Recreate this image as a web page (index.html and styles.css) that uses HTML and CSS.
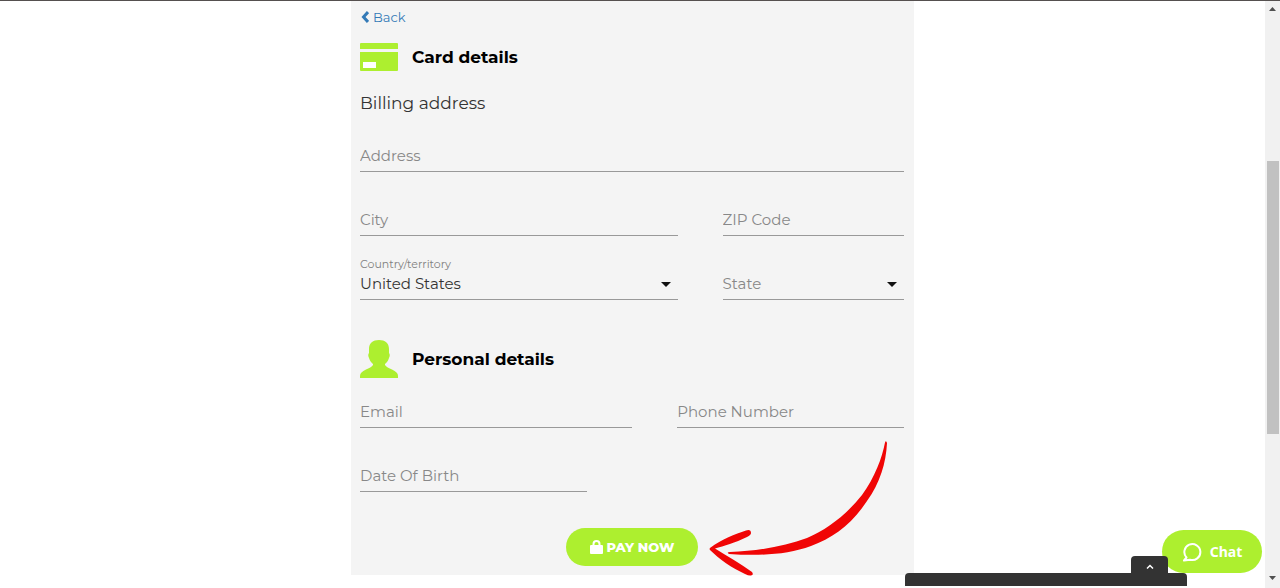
FILE: index.html
```html
<!DOCTYPE html>
<html lang="en">
<head>
<meta charset="utf-8">
<meta name="viewport" content="width=device-width, initial-scale=1.0">
<title>Card details</title>
<link rel="stylesheet" href="styles.css">
</head>
<body>
<div class="window">
  <main class="page">
    <form class="payment">
      <a class="back" href="#">
        <svg width="9" height="12" viewBox="0 0 9 12"><path d="M8 1 3.500 6 8 11" fill="none" stroke="currentColor" stroke-width="3"/></svg>
        Back
      </a>

      <h2 class="title">
        <svg width="38" height="38" viewBox="0 0 38 38" fill="#adef2f">
          <path d="M1 5h36q1 0 1 1v5H0V6q0-1 1-1z"/>
          <path d="M0 14h38v18q0 1-1 1H1q-1 0-1-1z"/>
          <path d="M3 24h13v6H3z" fill="#fff"/>
        </svg>
        Card details
      </h2>
      <h3 class="subtitle">Billing address</h3>

      <div class="row">
        <div class="field"><input type="text" placeholder="Address" aria-label="Address"></div>
      </div>
      <div class="row city-row">
        <div class="field"><input type="text" placeholder="City" aria-label="City"></div>
        <div class="field"><input type="text" placeholder="ZIP Code" aria-label="ZIP Code"></div>
      </div>
      <div class="row city-row">
        <div class="field drop">
          <label for="country">Country/territory</label>
          <select id="country"><option>United States</option></select>
        </div>
        <div class="field drop">
          <select class="empty" aria-label="State"><option>State</option></select>
        </div>
      </div>

      <h2 class="title personal">
        <svg width="38" height="38" viewBox="0 0 38 38" fill="#adef2f">
          <path d="M19 0C25 0 29 3 29 9v4c1 1 1 3 0 5-1 3-2 4-4 6v1c1 2 4 3 7 4.500 4 2 6 3.500 6 6.500v2H0v-2c0-3 2-4.500 6-6.500 3-1.500 6-2.500 7-4.500v-1c-2-2-3-3-4-6-1-2-1-4 0-5V9C9 3 13 0 19 0z"/>
        </svg>
        Personal details
      </h2>

      <div class="row email-row">
        <div class="field"><input type="email" placeholder="Email" aria-label="Email"></div>
        <div class="field"><input type="tel" placeholder="Phone Number" aria-label="Phone Number"></div>
      </div>
      <div class="row birth-row">
        <div class="field"><input type="text" placeholder="Date Of Birth" aria-label="Date Of Birth"></div>
      </div>

      <button class="pay" type="button">
        <svg width="13" height="14" viewBox="0 0 13 14"><path d="M3.500 7V4a3 3 0 0 1 6 0v3" fill="none" stroke="#fff" stroke-width="2"/><rect y="5" width="13" height="9" rx="1" fill="#fff"/></svg>
        PAY NOW
      </button>

      <svg class="arrow" width="180" height="140" viewBox="0 0 180 140" fill="#f00505">
        <path d="M177 5.500Q178 3 179 6C178 26 172 46 159 64C144 87 125 101 103 109C79 118 50 119 21 117Q18 115 22 115C51 114 77 109 99 101C120 92 139 77 154 58C167 40 174 21 177 5.500z"/>
        <path d="M2 111C14 102 27 97 38 93.500Q43 92 43 96Q43 98 39 100C27 106 16 109 7 111.500C19 119 33 127 44 135Q46 138 43 138.500Q41 139 37 137C24 131 11 122 2 113Q1 112 2 111z"/>
      </svg>
    </form>

    <button class="chat" type="button">
      <svg width="20" height="20" viewBox="0 0 20 20"><path d="M4.500 15.500A8 8 0 1 1 8 17.700L2 18.500z" fill="none" stroke="#fff" stroke-width="2" stroke-linejoin="round"/></svg>
      Chat
    </button>
    <div class="drawer">
      <button class="drawer-tab" type="button" aria-label="Open">
        <svg width="8" height="5" viewBox="0 0 8 5"><path d="M1 4.500l3-3 3 3" fill="none" stroke="#fff" stroke-width="1.500"/></svg>
      </button>
      <div class="drawer-bar"></div>
    </div>
  </main>

  <div class="scroll">
    <svg width="15" height="17" viewBox="0 0 15 17"><path d="M4 10l3.500-4L11 10z" fill="#505050"/></svg>
    <div class="track">
      <div class="thumb"></div>
    </div>
    <svg width="15" height="17" viewBox="0 0 15 17"><path d="M4 5l3.500 4L11 5z" fill="#505050"/></svg>
  </div>
</div>
</body>
</html>
```
FILE: styles.css
```css
* {
  margin: 0;
  padding: 0;
  box-sizing: border-box;
}
body {
  background: #fff;
  font-family: Montserrat, Inter, sans-serif;
  font-size: 15px;
  color: #333;
}
input, select, button {
  font: inherit;
  border: 0;
  background: none;
}
svg {
  flex: none;
}
.window {
  display: flex;
  height: 100vh;
  border-top: 1px solid #55504f;
  overflow: hidden;
}
.page {
  flex: 1;
  position: relative;
}
.payment {
  position: relative;
  width: 100%;
  max-width: 563px;
  margin: 0 auto;
  padding: 7px 10px 9px 9px;
  background: #f4f4f4;
}
.back {
  display: flex;
  align-items: center;
  gap: 4px;
  height: 18px;
  font-size: 13px;
  color: #337ab7;
  text-decoration: none;
}
.title {
  display: flex;
  align-items: center;
  gap: 14px;
  margin-top: 12px;
  font-size: 17px;
  font-weight: 700;
  line-height: 36px;
  color: #000;
}
.subtitle {
  margin-top: 15px;
  font-size: 17px;
  font-weight: 400;
  line-height: 24px;
}
.personal {
  margin-top: 40px;
}
.personal + .row {
  margin-top: -14px;
}
.row {
  display: grid;
  column-gap: 45px;
}
.subtitle + .row {
  margin-top: -7px;
}
.city-row {
  grid-template-columns: 7fr 4fr;
}
.email-row {
  grid-template-columns: 6fr 5fr;
}
.birth-row {
  grid-template-columns: 5fr 6fr;
}
.field {
  display: flex;
  flex-direction: column;
  justify-content: flex-end;
  position: relative;
  height: 64px;
  padding-bottom: 3px;
  border-bottom: 1px solid #999;
}
.field label {
  font-size: 11px;
  line-height: 16px;
  color: #808080;
}
.field input, .field select {
  width: 100%;
  height: 24px;
  line-height: 24px;
  color: #333;
  outline: none;
}
.field select {
  appearance: none;
}
.field input::placeholder, .field .empty {
  color: #888;
  opacity: 1;
}
/* caret */
.drop::after {
  content: "";
  position: absolute;
  right: 7px;
  bottom: 12px;
  border: 5px solid transparent;
  border-top-color: #111;
  border-bottom: 0;
}
.pay {
  display: flex;
  align-items: center;
  justify-content: center;
  gap: 4px;
  width: 132px;
  height: 38px;
  margin: 36px auto 0;
  border-radius: 19px;
  background: #adef2f;
  color: #fff;
  font-size: 13px;
  font-weight: 800;
}
.arrow {
  position: absolute;
  right: 26px;
  bottom: -2px;
}
.chat {
  display: flex;
  align-items: center;
  justify-content: center;
  gap: 8px;
  position: absolute;
  right: 3px;
  bottom: 15px;
  width: 100px;
  height: 43px;
  border-radius: 22px;
  background: #adef2f;
  color: #fff;
  font-family: "Noto Sans", sans-serif;
  font-size: 14px;
  font-weight: 700;
}
.drawer {
  position: absolute;
  right: 78px;
  bottom: 2px;
  width: 282px;
}
.drawer-tab {
  display: flex;
  align-items: center;
  justify-content: center;
  width: 37px;
  height: 17px;
  margin: 0 19px 0 auto;
  padding-top: 4px;
  border-radius: 4px 4px 0 0;
  background: #333;
}
.drawer-bar {
  height: 13px;
  border-radius: 4px 4px 0 0;
  background: #333;
}
.scroll {
  display: flex;
  flex-direction: column;
  width: 15px;
  background: #f1f1f1;
}
.track {
  flex: 1;
  display: grid;
  grid-template-rows: 143fr 273fr 137fr;
}
.thumb {
  grid-row: 2;
  margin: 0 1px 0 2px;
  background: #c1c1c1;
}
```
